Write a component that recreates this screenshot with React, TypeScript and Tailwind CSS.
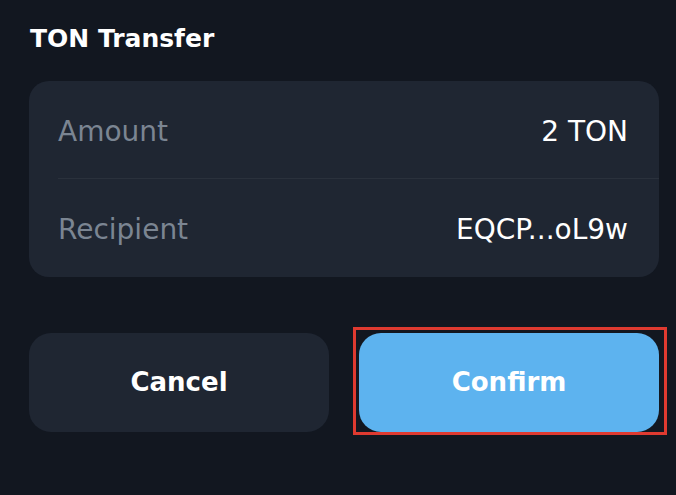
export default function App() {
  const rows = [
    { label: 'Amount', value: '2 TON' },
    { label: 'Recipient', value: 'EQCP...oL9w' },
  ];

  return (
    <div
      className="min-h-[495px] w-full bg-[#121720] pl-[29px] pr-[17px] pt-[24px] text-white"
      style={{ fontFamily: '"DejaVu Sans", sans-serif' }}
    >
      <h1 className="text-[25px] font-bold leading-[29px] pl-[1px]">TON Transfer</h1>

      {/* Details card */}
      <div className="mt-[28px] overflow-hidden rounded-[20px] bg-[#1f2632]">
        {rows.map((row, i) => (
          <div
            key={row.label}
            className={
              i === 0
                ? 'ml-[29px] flex h-[98px] items-center justify-between border-b border-[#2a313c] pr-[31px] pt-[4px]'
                : 'ml-[29px] flex h-[98px] items-center justify-between pr-[31px] pt-[4px]'
            }
          >
            <span className="text-[28px] text-[#7b8592]">{row.label}</span>
            <span className="text-[28px] text-white">{row.value}</span>
          </div>
        ))}
      </div>

      {/* Actions */}
      <div className="mt-[56px] grid grid-cols-2 gap-[30px]">
        <button className="h-[99px] rounded-[22px] bg-[#1f2632] text-[26px] font-bold text-white">
          Cancel
        </button>
        <div className="relative">
          <button className="h-[99px] w-full rounded-[22px] bg-[#5db3ef] text-[26px] font-bold text-white">
            Confirm
          </button>
          <div className="pointer-events-none absolute -bottom-[3px] -left-[6px] -right-[8px] -top-[6px] border-[3px] border-[#df3a30]" />
        </div>
      </div>
    </div>
  );
}
